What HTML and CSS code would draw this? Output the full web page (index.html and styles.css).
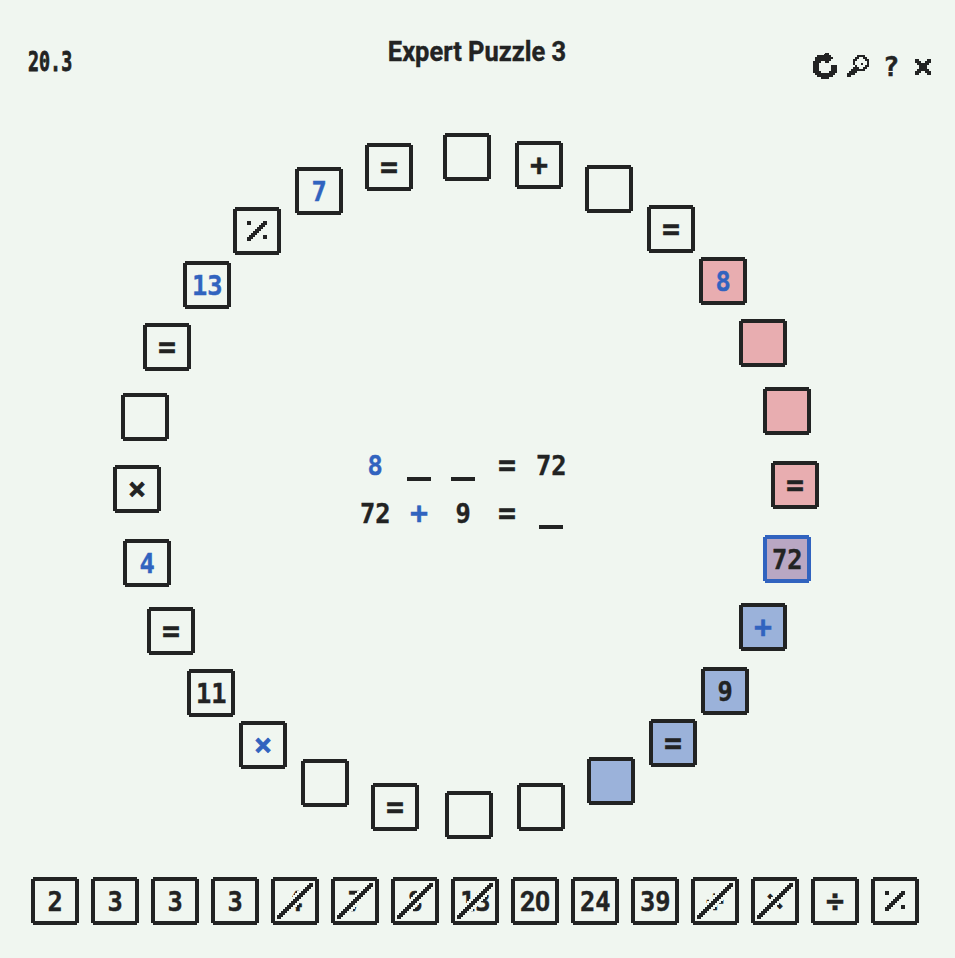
FILE: index.html
```html
<!DOCTYPE html>
<html lang="en">
<head>
<meta charset="utf-8">
<title>Expert Puzzle 3</title>
<link rel="stylesheet" href="styles.css">
</head>
<body>
<svg width="0" height="0" class="defs">
  <symbol id="modulo" viewBox="0 0 24 24"><path d="M7 7h2v2h-2zM15 14h2v2h-2zM7 17v-2h1v-1h1v-1h1v-1h1v-1h1v-1h1v-1h1v-1h1v-1h2v2h-1v1h-1v1h-1v1h-1v1h-1v1h-1v1h-1v1h-1v1z"/></symbol>
  <symbol id="strike" viewBox="0 0 24 24"><path d="M3 21v-2h1v-1h1v-1h1v-1h1v-1h1v-1h1v-1h1v-1h1v-1h1v-1h1v-1h1v-1h1v-1h1v-1h1v-1h1v-1h1v-1h2v2h-1v1h-1v1h-1v1h-1v1h-1v1h-1v1h-1v1h-1v1h-1v1h-1v1h-1v1h-1v1h-1v1h-1v1h-1v1h-1v1z"/></symbol>
</svg>
<header class="header">
  <div class="timer">20.3</div>
  <h1 class="title"><span>Expert Puzzle 3</span></h1>
  <nav class="tools">
    <svg class="reload" viewBox="0 0 12 13"><path d="M6 0h2v1h1v1h1v1h-1v1h-1v1h-2v-1h-2v1h-1v4h1v1h4v-1h1v-3h3v4h-1v1h-1v1h-2v1h-4v-1h-2v-1h-1v-1h-1v-6h1v-2h1v-1h3z"/></svg>
    <svg class="search" viewBox="0 0 11 11"><path fill-rule="evenodd" d="M5 0h4v1h1v1h1v4h-1v1h-1v1h-4v1h-1v1h-2v1h-2v-2h1v-1h1v-1h1v-1h1v-1h-1v-3h1v-1h1zM6 1v1h-1v1h-1v2h1v1h1v1h2v-1h1v-1h1v-2h-1v-1h-1v-1zM7 4h1v1h-1z"/></svg>
    <span class="help">?</span>
    <svg class="close" viewBox="0 0 8 8"><path d="M0 0h2v1h1v1h2v-1h1v-1h2v2h-1v1h-1v2h1v1h1v2h-2v-1h-1v-1h-2v1h-1v1h-2v-2h1v-1h1v-2h-1v-1h-1z"/></svg>
  </nav>
</header>
<main class="board">
  <div class="tile" style="--x:467;--y:57"></div>
  <div class="tile op" style="--x:539;--y:65"><span>+</span></div>
  <div class="tile" style="--x:609;--y:89"></div>
  <div class="tile op" style="--x:671;--y:129"><span>=</span></div>
  <div class="tile pink placed" style="--x:723;--y:181"><span>8</span></div>
  <div class="tile pink" style="--x:763;--y:243"></div>
  <div class="tile pink" style="--x:787;--y:311"></div>
  <div class="tile pink op" style="--x:795;--y:385"><span>=</span></div>
  <div class="tile both" style="--x:787;--y:459"><span>72</span></div>
  <div class="tile blue placed op" style="--x:763;--y:527"><span>+</span></div>
  <div class="tile blue" style="--x:725;--y:591"><span>9</span></div>
  <div class="tile blue op" style="--x:673;--y:643"><span>=</span></div>
  <div class="tile blue" style="--x:611;--y:681"></div>
  <div class="tile" style="--x:541;--y:707"></div>
  <div class="tile" style="--x:469;--y:715"></div>
  <div class="tile op" style="--x:395;--y:707"><span>=</span></div>
  <div class="tile" style="--x:325;--y:683"></div>
  <div class="tile placed op times" style="--x:263;--y:645"><span>×</span></div>
  <div class="tile" style="--x:211;--y:593"><span>11</span></div>
  <div class="tile op" style="--x:171;--y:531"><span>=</span></div>
  <div class="tile placed" style="--x:147;--y:463"><span>4</span></div>
  <div class="tile op times" style="--x:137;--y:389"><span>×</span></div>
  <div class="tile" style="--x:145;--y:317"></div>
  <div class="tile op" style="--x:167;--y:247"><span>=</span></div>
  <div class="tile placed" style="--x:207;--y:185"><span>13</span></div>
  <div class="tile" style="--x:257;--y:131"><svg><use href="#modulo"/></svg></div>
  <div class="tile placed" style="--x:319;--y:91"><span>7</span></div>
  <div class="tile op" style="--x:389;--y:67"><span>=</span></div>
  <section class="equations">
    <div class="cell placed"><span>8</span></div><div class="cell blank"></div><div class="cell blank"></div><div class="cell op"><span>=</span></div><div class="cell"><span>72</span></div>
    <div class="cell"><span>72</span></div><div class="cell placed op"><span>+</span></div><div class="cell"><span>9</span></div><div class="cell op"><span>=</span></div><div class="cell blank"></div>
  </section>
</main>
<footer class="tray">
  <div class="tile"><span>2</span></div>
  <div class="tile"><span>3</span></div>
  <div class="tile"><span>3</span></div>
  <div class="tile"><span>3</span></div>
  <div class="tile used"><span>4</span><svg><use href="#strike"/></svg></div>
  <div class="tile used"><span>7</span><svg><use href="#strike"/></svg></div>
  <div class="tile used"><span>8</span><svg><use href="#strike"/></svg></div>
  <div class="tile used"><span>13</span><svg><use href="#strike"/></svg></div>
  <div class="tile plain"><span>20</span></div>
  <div class="tile"><span>24</span></div>
  <div class="tile"><span>39</span></div>
  <div class="tile used op"><span>+</span><svg><use href="#strike"/></svg></div>
  <div class="tile used op times"><span>×</span><svg><use href="#strike"/></svg></div>
  <div class="tile op"><span>÷</span></div>
  <div class="tile"><svg><use href="#modulo"/></svg></div>
</footer>
</body>
</html>
```
FILE: styles.css
```css
:root {
  --paper: #f0f6f0;
  --ink: #222323;
  --accent: #3163bf;
}
* { box-sizing: border-box; }
body {
  margin: 0;
  width: 955px;
  height: 958px;
  overflow: hidden;
  background: var(--paper);
  color: var(--ink);
  font: bold 27px/28px "DejaVu Sans Mono", monospace;
}
svg { fill: currentColor; shape-rendering: crispEdges; display: block; }
.defs { position: absolute; }
.header {
  height: 100px;
  display: grid;
  grid-template-columns: 200px 1fr 200px;
}
.timer {
  padding: 48px 0 0 28px;
  transform: scaleX(.68);
  transform-origin: 28px 0;
  -webkit-text-stroke: .8px;
}
.title {
  margin: 0;
  padding-top: 38px;
  text-align: center;
  white-space: nowrap;
  font: bold 28px/28px Roboto, sans-serif;
}
.title span { display: inline-block; transform: scaleX(.91); -webkit-text-stroke: .4px; }
.tools {
  display: flex;
  padding: 53px 24px 0 0;
  justify-content: flex-end;
}
.reload { width: 24px; height: 26px; }
.search { width: 22px; height: 22px; margin: 2px 0 0 10px; }
.help { width: 16px; height: 28px; margin: 0 16px 0 14px; -webkit-text-stroke: .5px; }
.close { width: 16px; height: 16px; margin-top: 6px; }

.board { position: relative; height: 777px; }
.tile {
  position: relative;
  flex: none;
  width: 48px;
  height: 48px;
  border: 4px solid var(--ink);
  display: flex;
  align-items: center;
  justify-content: center;
  clip-path: polygon(2px 0, 46px 0, 46px 2px, 48px 2px, 48px 46px, 46px 46px, 46px 48px, 2px 48px, 2px 46px, 0 46px, 0 2px, 2px 2px);
}
.board .tile {
  position: absolute;
  left: calc(var(--x) * 1px - 24px);
  top: calc(var(--y) * 1px - 24px);
}
.tile svg { position: absolute; left: -4px; top: -4px; width: 48px; height: 48px; }
.pink { background: #e8adb0; }
.blue { background: #9bb2da; }
.both { background: #b9a7c3; border-color: var(--accent); }
.tile span, .cell span {
  padding-top: 2px;
  transform: scaleX(.94);
  -webkit-text-stroke: .4px;
}
.placed span { color: var(--accent); }
.tile.op span, .cell.op span { font-size: 30px; padding: 0 0 1px; transform: none; }
.tile.times span { -webkit-text-stroke: .7px; }
.used svg { stroke: var(--paper); stroke-width: 2px; paint-order: stroke; }
.plain span { font-family: Roboto, sans-serif; font-size: 28px; }

.equations {
  position: absolute;
  left: 353px;
  top: 341px;
  display: grid;
  grid-template-columns: repeat(5, 44px);
  grid-auto-rows: 48px;
}
.cell { display: flex; align-items: center; justify-content: center; }
.blank::after { content: ""; width: 24px; height: 4px; margin-top: 28px; background: var(--ink); }

.tray { display: flex; gap: 12px; padding-left: 31px; }
```
